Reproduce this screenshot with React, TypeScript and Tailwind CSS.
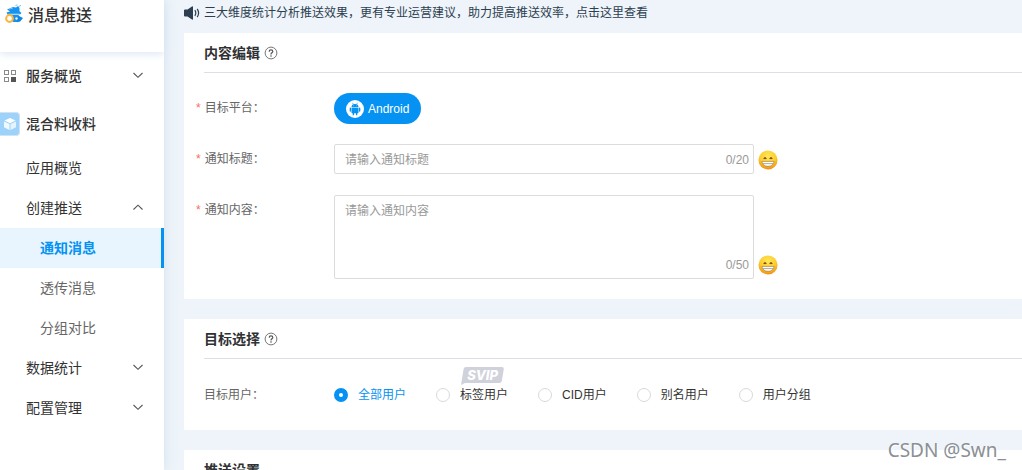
import { useState, type ReactNode } from "react";

function PushLogo() {
  return (
    <svg className="size-5 shrink-0" viewBox="0 0 20 20" aria-hidden="true">
      <path d="M3 5.500 9 3l3 .5L14 2l1.500 2v3.200l2 1.800-1.500 1.500H3.500L2.500 8.600 6 7.400z" fill="#1593ee" />
      <path d="M5 5.200 9 4" stroke="#8fcdf8" strokeWidth=".8" />
      <path d="M11.500 1.500 13.500.8M14.500 2.600 17 1.400" stroke="#6fbff7" strokeWidth="1" />
      <path d="M4 10.800h10.500l1 3-2 4.200H9L4 12z" fill="#1c8fe6" />
      <path d="M14.500 11.800 19 14l-2.800 3.400-3.200.8z" fill="#0b86e4" />
      <path d="M4.500 10.200h11" stroke="#d6eefd" strokeWidth=".8" />
      <circle cx="12.500" cy="14.500" r="1.200" fill="#e7f5ff" />
      <circle cx="5.500" cy="14.500" r="3.400" fill="#fff" stroke="#fbb53c" strokeWidth="2" />
    </svg>
  );
}

function GridIcon() {
  return (
    <svg className="size-3 shrink-0" viewBox="0 0 12 12" aria-hidden="true">
      <g fill="#fff" stroke="#8a8a8a" strokeWidth="1">
        <rect x=".5" y=".5" width="4" height="4" />
        <rect x="7.500" y=".5" width="4" height="4" />
        <rect x=".5" y="7.500" width="4" height="4" />
      </g>
      <rect x="7" y="7" width="5" height="5" fill="#555" />
    </svg>
  );
}

function CubeIcon() {
  return (
    <svg className="size-4" viewBox="0 0 16 16" aria-hidden="true">
      <path d="M8 2 13.500 4.600 8 7.200 2.500 4.600z" fill="#fff" />
      <path d="M2 5.500l5.500 2.600V14L2 11.300z" fill="#f2faff" />
      <path d="M14 5.500 8.500 8.100V14l5.500-2.700z" fill="#e3f4ff" />
    </svg>
  );
}

function Chevron({ up = false }: { up?: boolean }) {
  return (
    <svg
      className="mr-5 ml-auto h-3 w-3"
      viewBox="0 0 12 12"
      fill="none"
      stroke="#555"
      strokeWidth="1.100"
      aria-hidden="true"
    >
      <path d={up ? "M1.500 7.500 6 3.200l4.500 4.300" : "M1.500 3 6 7.300 10.500 3"} />
    </svg>
  );
}

function SpeakerIcon() {
  return (
    <svg className="mt-px h-4 w-4 shrink-0" viewBox="0 0 16 16" aria-hidden="true">
      <path d="M0 5.500Q0 4.500 1 4.500h2.500L8 1.400q1-.6 1 .6v12q0 1.200-1 .6L3.500 11.500H1q-1 0-1-1z" fill="#2c3e50" />
      <path d="M10.800 5.200q2 2.800 0 5.600M13.200 3.800q2.800 4.200 0 8.400" fill="none" stroke="#2c3e50" strokeWidth="1.200" />
    </svg>
  );
}

function HelpIcon() {
  return (
    <svg className="size-3.5" viewBox="0 0 14 14" fill="none" aria-hidden="true">
      <circle cx="7" cy="7" r="5.900" stroke="#777" strokeWidth="1" />
      <path d="M5.200 5.700Q5.200 3.900 7 3.900T8.800 5.500Q8.800 6.400 7.800 6.900 7 7.300 7 8.400" stroke="#555" strokeWidth="1.200" />
      <circle cx="7" cy="10" r=".8" fill="#555" />
    </svg>
  );
}

function AndroidIcon() {
  return (
    <svg className="size-[18px]" viewBox="0 0 18 18" aria-hidden="true">
      <circle cx="9" cy="9" r="9" fill="#fff" />
      <g fill="#0592f3">
        <path d="M5.500 7.200a3.500 3.300 0 0 1 7 0z" />
        <path d="M5.500 7.800h7v4.700q0 .7-.7.700H6.200q-.7 0-.7-.7z" />
        <rect x="3.700" y="7.500" width="1.300" height="4.200" rx=".6" />
        <rect x="13" y="7.500" width="1.300" height="4.200" rx=".6" />
        <rect x="6.700" y="12.500" width="1.400" height="2.800" rx=".6" />
        <rect x="9.900" y="12.500" width="1.400" height="2.800" rx=".6" />
      </g>
      <path d="M6.500 2.800 7.400 4.400M11.500 2.800 10.600 4.400" stroke="#0592f3" strokeWidth=".6" />
      <circle cx="7.500" cy="5.800" r=".4" fill="#fff" />
      <circle cx="10.500" cy="5.800" r=".4" fill="#fff" />
    </svg>
  );
}

function EmojiIcon() {
  return (
    <svg className="size-5" viewBox="0 0 20 20" aria-hidden="true">
      <defs>
        <radialGradient id="face" cx="50%" cy="30%" r="70%">
          <stop offset="0" stopColor="#ffe65a" />
          <stop offset=".6" stopColor="#fdcd2c" />
          <stop offset="1" stopColor="#f08c10" />
        </radialGradient>
      </defs>
      <circle cx="10" cy="10" r="9.500" fill="url(#face)" />
      <path d="M5.800 9q1.200-2.200 2.400 0M11.800 9q1.200-2.200 2.400 0" fill="none" stroke="#6b3a0c" strokeWidth="1.100" />
      <path d="M3.800 11.400h12.400q-1 4.900-6.200 4.900t-6.200-4.900z" fill="#fff" stroke="#94703c" strokeWidth=".6" />
      <path d="M4.600 13.600h10.800" stroke="#8f8578" strokeWidth=".7" />
    </svg>
  );
}

function NavLink({ children, active = false }: { children: ReactNode; active?: boolean }) {
  return (
    <a
      href="#"
      aria-current={active ? "page" : undefined}
      className={
        active
          ? "flex h-10 items-center border-r-[3px] border-[#0592f3] bg-[#e8f5ff] pl-10 font-bold text-[#0592f3]"
          : "flex h-10 items-center pl-10 text-[#666]"
      }
    >
      {children}
    </a>
  );
}

function NavGroup({ children, open = false }: { children: ReactNode; open?: boolean }) {
  return (
    <button type="button" aria-expanded={open} className="flex h-10 w-full items-center pl-[26px]">
      {children}
      <Chevron up={open} />
    </button>
  );
}

function Card({ title, help = true, children }: { title: string; help?: boolean; children?: ReactNode }) {
  return (
    <section className="bg-white pl-5">
      <div className="flex h-10 items-center gap-1 border-b border-[#dcdfe6]">
        <h2 className="text-sm font-bold text-[#303133]">{title}</h2>
        {help && (
          <button type="button" aria-label="帮助">
            <HelpIcon />
          </button>
        )}
      </div>
      {children}
    </section>
  );
}

function Field({ label, htmlFor, children }: { label: string; htmlFor: string; children: ReactNode }) {
  return (
    <div className="flex min-h-[31px] items-start">
      <label htmlFor={htmlFor} className="-ml-2 flex h-[30px] w-[138px] shrink-0 items-center gap-1 text-[#666]">
        <span className="text-[#f56c6c]">*</span>
        {label}：
      </label>
      {children}
    </div>
  );
}

const audiences = ["全部用户", "标签用户", "CID用户", "别名用户", "用户分组"];

export default function App() {
  const [audience, setAudience] = useState("全部用户");
  const [title, setTitle] = useState("");
  const [content, setContent] = useState("");

  return (
    <div className="relative flex h-screen overflow-hidden bg-[#eef4f9] font-['Liberation_Sans','Noto_Sans_CJK_SC',sans-serif] text-xs text-[#333]">
      <aside className="z-10 w-[164px] shrink-0 bg-white shadow-[0_0_12px_#d3e0ee]">
        <header className="flex h-[52px] items-start gap-1 pt-1 pl-1 shadow-[0_2px_8px_#dce7f2]">
          <PushLogo />
          <h1 className="text-base leading-6 font-medium">消息推送</h1>
        </header>
        <nav className="text-sm">
          <button type="button" className="flex h-12 w-full items-center gap-2.5 pl-1 font-medium">
            <GridIcon />
            服务概览
            <Chevron />
          </button>
          <a href="#" className="flex h-12 items-center gap-1.5 font-medium">
            <span className="flex h-6 w-5 items-center justify-center rounded-r border border-l-0 border-[#cfe3f1] bg-[#9dd3fb]">
              <CubeIcon />
            </span>
            混合料收料
          </a>
          <a href="#" className="flex h-10 items-center pl-[26px]">
            应用概览
          </a>
          <NavGroup open>创建推送</NavGroup>
          <NavLink active>通知消息</NavLink>
          <NavLink>透传消息</NavLink>
          <NavLink>分组对比</NavLink>
          <NavGroup>数据统计</NavGroup>
          <NavGroup>配置管理</NavGroup>
        </nav>
      </aside>

      <main className="flex min-w-0 grow flex-col pl-5">
        <a href="#" className="flex h-[33px] shrink-0 items-start gap-1 pt-1 leading-[18px] text-[#2c3e50]">
          <SpeakerIcon />
          三大维度统计分析推送效果，更有专业运营建议，助力提高推送效率，点击这里查看
        </a>

        <div className="flex flex-col gap-5">
          <Card title="内容编辑">
            <div className="flex flex-col gap-5 py-5">
              <Field label="目标平台" htmlFor="platform">
                <button
                  id="platform"
                  type="button"
                  className="flex h-[31px] items-center gap-1 rounded-full bg-[#0592f3] px-3 text-white"
                >
                  <AndroidIcon />
                  Android
                </button>
              </Field>
              <Field label="通知标题" htmlFor="title">
                <div className="relative w-[420px]">
                  <input
                    id="title"
                    type="text"
                    maxLength={20}
                    value={title}
                    onChange={(e) => setTitle(e.target.value)}
                    placeholder="请输入通知标题"
                    className="block h-[30px] w-full rounded-xs border border-[#dcdcdc] pt-0.5 pr-12 pl-2.5 placeholder:text-[#999]"
                  />
                  <span className="absolute right-[5px] bottom-1.5 leading-4 text-[#999]">{title.length}/20</span>
                </div>
                <button type="button" aria-label="插入表情" className="ml-1 self-center">
                  <EmojiIcon />
                </button>
              </Field>
              <Field label="通知内容" htmlFor="content">
                <div className="relative w-[420px]">
                  <textarea
                    id="content"
                    maxLength={50}
                    value={content}
                    onChange={(e) => setContent(e.target.value)}
                    placeholder="请输入通知内容"
                    className="block h-[84px] w-full resize-none rounded-xs border border-[#dcdcdc] py-1.5 pr-12 pl-2.5 leading-[18px] placeholder:text-[#999]"
                  />
                  <span className="absolute right-[5px] bottom-1.5 leading-4 text-[#999]">{content.length}/50</span>
                </div>
                <button type="button" aria-label="插入表情" className="mb-1 ml-1 self-end">
                  <EmojiIcon />
                </button>
              </Field>
            </div>
          </Card>

          <Card title="目标选择">
            <div role="radiogroup" aria-labelledby="audience-label" className="flex h-[71px] items-center">
              <span id="audience-label" className="w-[130px] shrink-0 text-[#666]">
                目标用户：
              </span>
              <div className="flex gap-[30px]">
                {audiences.map((name) => (
                  <label key={name} className="relative flex items-center gap-2.5 has-checked:text-[#0592f3]">
                    <input
                      type="radio"
                      name="audience"
                      checked={audience === name}
                      onChange={() => setAudience(name)}
                      className="size-3.5 appearance-none rounded-full border border-[#d9d9d9] bg-white checked:border-5 checked:border-[#0592f3]"
                    />
                    {name}
                    {name === "标签用户" && (
                      <span className="absolute bottom-full left-[25px] mb-0.5 flex h-[18px] w-[43px] justify-center">
                        <svg className="absolute inset-0" viewBox="0 0 43 18" aria-hidden="true">
                          <path d="M5 0h36q2 0 1.800 2l-2 12q-.4 2-2.400 2H4L0 18 2.600 2Q3 0 5 0z" fill="#cfd2da" />
                        </svg>
                        <span className="relative font-['Inter',sans-serif] text-[13px] leading-4 font-extrabold text-white italic">
                          SVIP
                        </span>
                      </span>
                    )}
                  </label>
                ))}
              </div>
            </div>
          </Card>

          <Card title="推送设置" help={false} />
        </div>
      </main>

      <div className="pointer-events-none absolute right-4 bottom-1.5 z-20 font-['Noto_Sans',sans-serif] text-[19px] leading-7 text-[#8b8f94] [text-shadow:1px_1px_0_#ffffff]">
        CSDN @Swn_
      </div>
    </div>
  );
}
